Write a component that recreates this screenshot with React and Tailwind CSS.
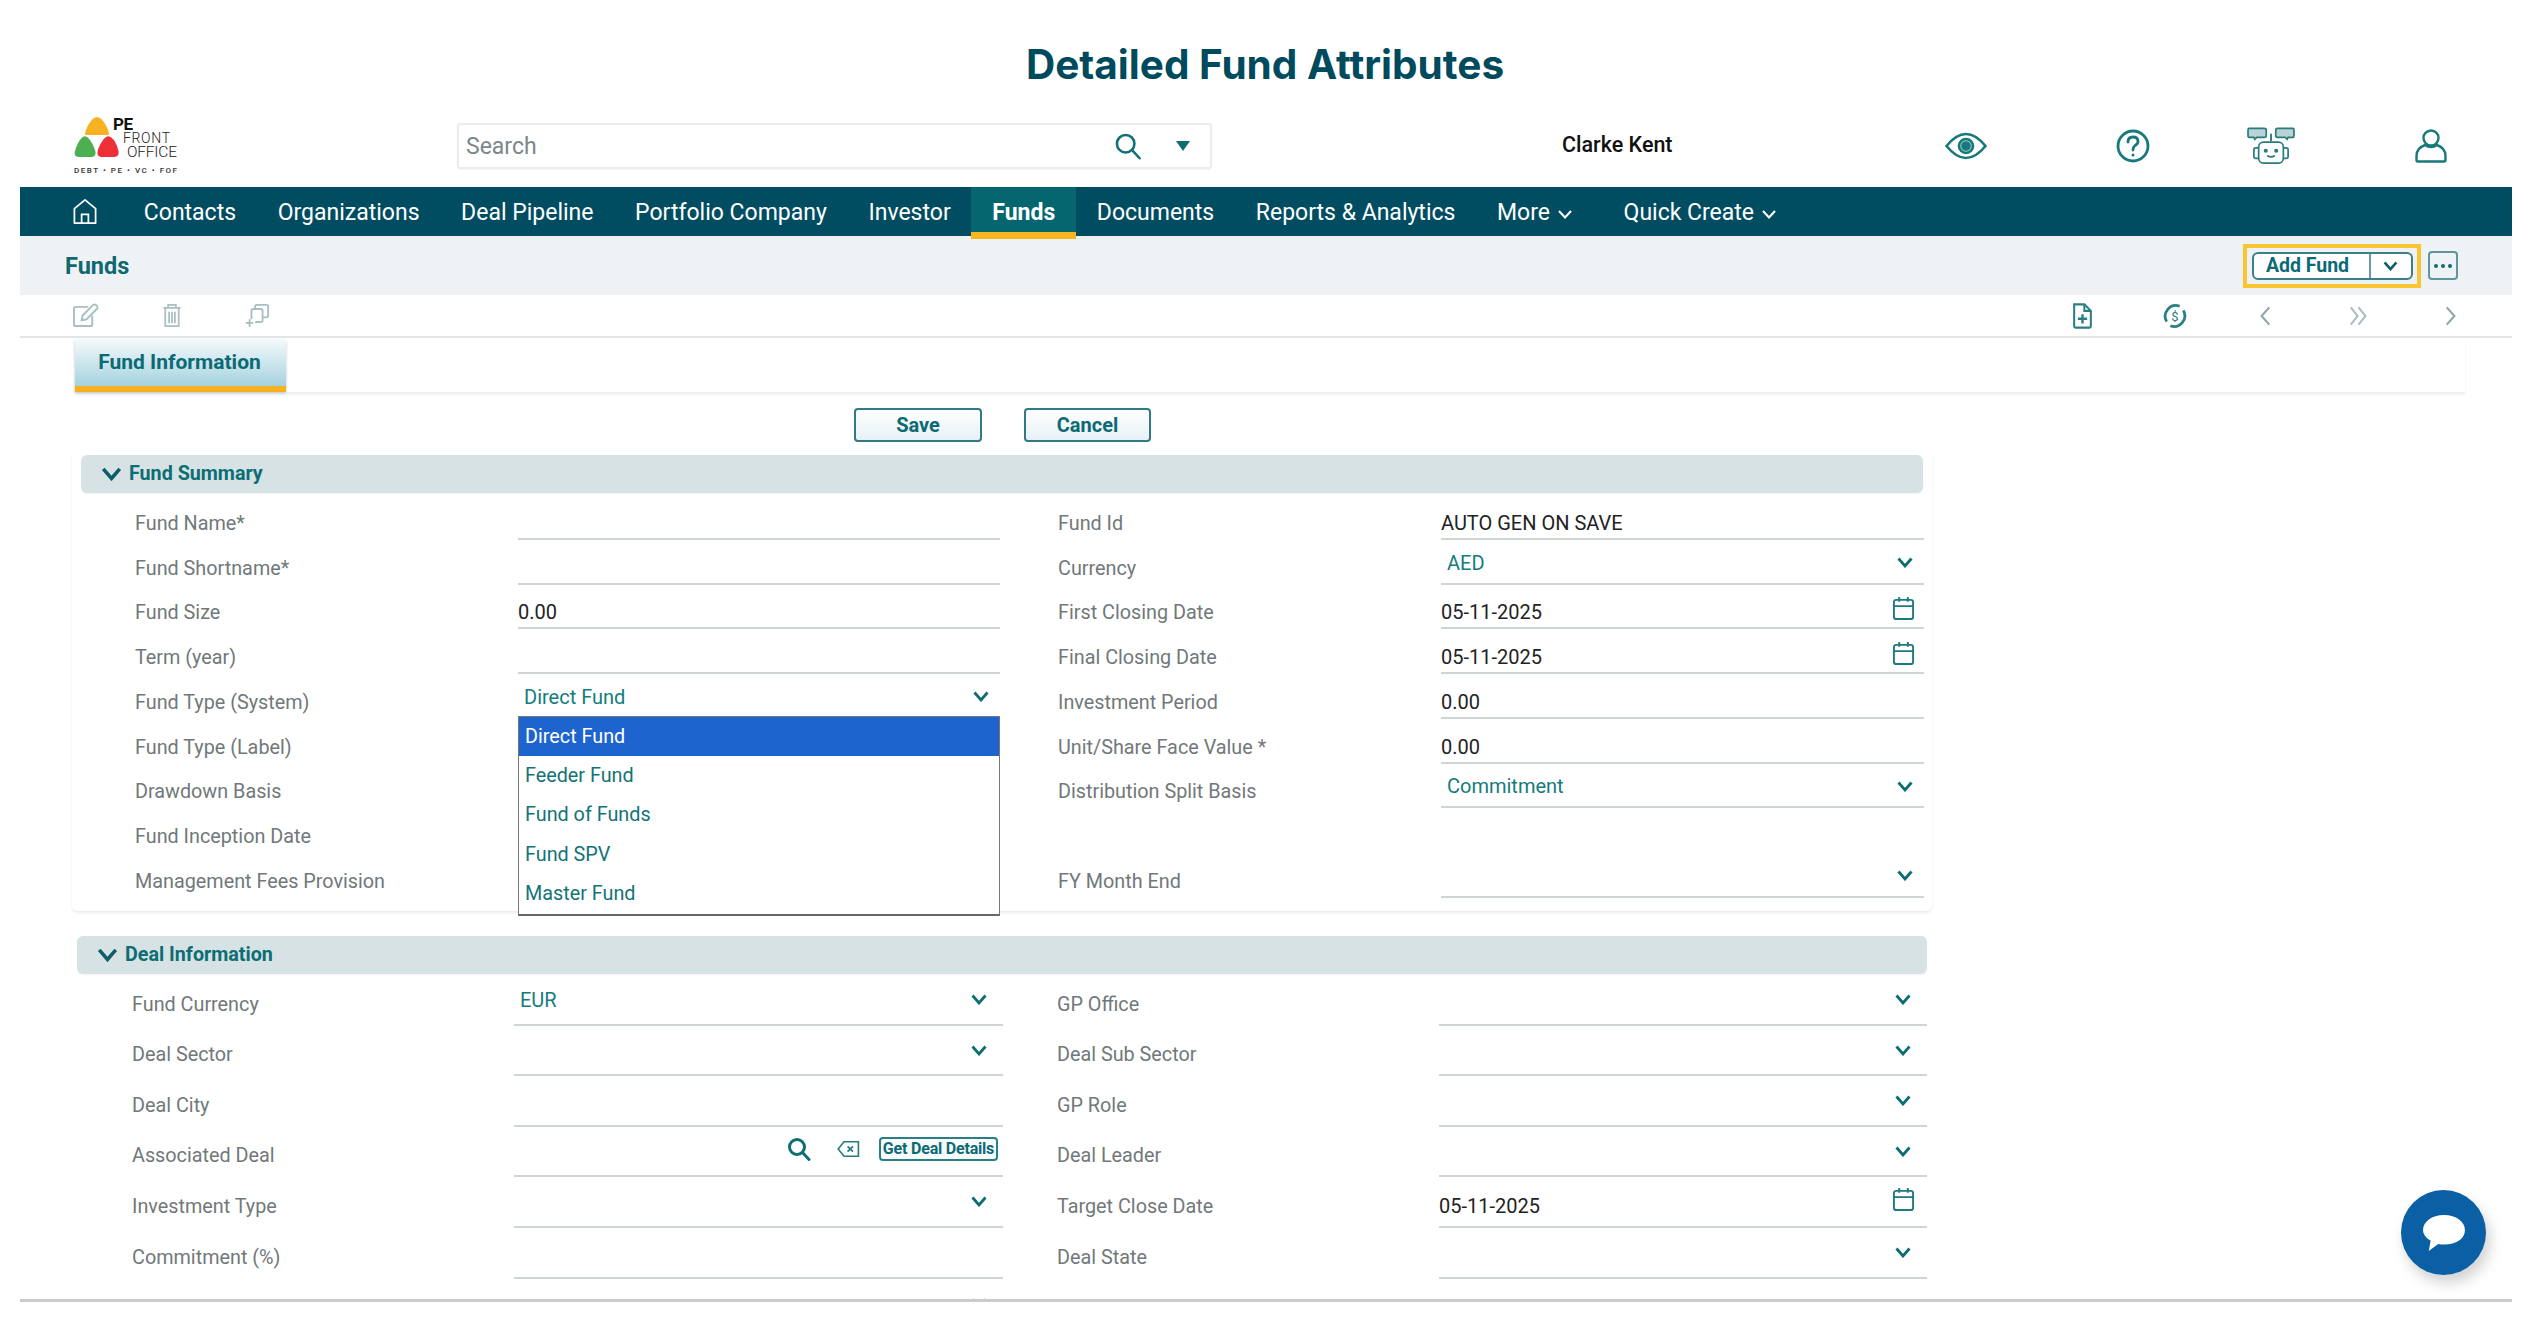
import React from 'react';

const NAV_ITEMS = ['Contacts', 'Organizations', 'Deal Pipeline', 'Portfolio Company', 'Investor', 'Funds', 'Documents', 'Reports & Analytics'];

const DROPDOWN_ITEMS = ['Direct Fund', 'Feeder Fund', 'Fund of Funds', 'Fund SPV', 'Master Fund'];

const SUMMARY_ROWS = [
  [{ label: 'Fund Name*' }, { label: 'Fund Id', text: 'AUTO GEN ON SAVE' }],
  [{ label: 'Fund Shortname*' }, { label: 'Currency', select: 'AED' }],
  [{ label: 'Fund Size', text: '0.00' }, { label: 'First Closing Date', date: '05-11-2025' }],
  [{ label: 'Term (year)' }, { label: 'Final Closing Date', date: '05-11-2025' }],
  [{ label: 'Fund Type (System)', select: 'Direct Fund', menu: true }, { label: 'Investment Period', text: '0.00' }],
  [{ label: 'Fund Type (Label)' }, { label: 'Unit/Share Face Value *', text: '0.00' }],
  [{ label: 'Drawdown Basis' }, { label: 'Distribution Split Basis', select: 'Commitment' }],
  [{ label: 'Fund Inception Date' }, { blank: true }],
  [{ label: 'Management Fees Provision' }, { label: 'FY Month End', select: '' }],
];

const DEAL_ROWS = [
  [{ label: 'Fund Currency', select: 'EUR' }, { label: 'GP Office', select: '' }],
  [{ label: 'Deal Sector', select: '' }, { label: 'Deal Sub Sector', select: '' }],
  [{ label: 'Deal City' }, { label: 'GP Role', select: '' }],
  [{ label: 'Associated Deal', lookup: true }, { label: 'Deal Leader', select: '' }],
  [{ label: 'Investment Type', select: '' }, { label: 'Target Close Date', date: '05-11-2025' }],
  [{ label: 'Commitment (%)' }, { label: 'Deal State', select: '' }],
];

const Chevron = ({ className = 'w-[16px] h-[11px] text-[#0d6e72]' }) => (
  <svg viewBox="0 0 16 11" className={className} fill="none" stroke="currentColor" strokeWidth="2.8">
    <path d="M1.5 1.5 L8 9 L14.5 1.5" />
  </svg>
);

const NavChevron = () => (
  <svg viewBox="0 0 14 9" className="w-[14px] h-[9px] ml-[8px] mt-[3px]" fill="none" stroke="currentColor" strokeWidth="2">
    <path d="M1 1 L7 7.5 L13 1" />
  </svg>
);

const CalendarIcon = () => (
  <svg viewBox="0 0 24 26" className="w-[23px] h-[25px] text-[#1f7a80]" fill="none" stroke="currentColor" strokeWidth="2">
    <rect x="2" y="4" width="20" height="20" rx="2.5" />
    <path d="M2 10.5 H22 M7.5 1 V6 M16.5 1 V6" />
  </svg>
);

const SearchIcon = ({ className, strokeWidth = 2.2 }) => (
  <svg viewBox="0 0 24 24" className={className} fill="none" stroke="currentColor" strokeWidth={strokeWidth}>
    <circle cx="10" cy="10" r="7.5" />
    <path d="M15.5 15.5 L22 22.5" strokeLinecap="round" />
  </svg>
);

const Logo = () => (
  <svg viewBox="0 0 104 60" className="w-[104px] h-[60px] overflow-visible">
    <path d="M23 1 C28 1 33 10 35 17 Q35.500 19 33 19 H13 Q10.500 19 11 17 C13 10 18 1 23 1 Z" fill="#f6b221" />
    <path d="M10 20.500 C14 19 20 29 21.500 36 C22 39 20 41 17 41 H5 C1 41 0 38 1 35 C3 28 7 21 10 20.500 Z" fill="#4cb052" />
    <path d="M35 20.500 C39 21 43 28 44.500 35 C45 38 44 41 40 41 H28 C25 41 23 39 23.500 36 C25 29 31 19 35 20.500 Z" fill="#ee2f37" />
    <text x="39" y="14" fontFamily="Roboto, sans-serif" fontSize="17" fontWeight="700" fill="#111" textLength="20">PE</text>
    <text x="49" y="27" fontFamily="Roboto, sans-serif" fontSize="14" fontWeight="300" fill="#222" textLength="47">FRONT</text>
    <text x="53" y="41" fontFamily="Roboto, sans-serif" fontSize="15.500" fontWeight="300" fill="#222" textLength="50">OFFICE</text>
    <text x="0" y="57" fontFamily="Roboto, sans-serif" fontSize="8" fontWeight="500" fill="#333" textLength="103">DEBT • PE • VC • FOF</text>
  </svg>
);

const RobotIcon = () => (
  <svg viewBox="0 0 50 40" className="w-[48px] h-[38px] text-[#2a7b7e]" fill="none" stroke="currentColor" strokeWidth="1.8">
    <path d="M2 1.500 H18 Q20 1.500 20 3.500 V9 Q20 11 18 11 H10 L8 13 L7 11 H2 Q0.800 11 0.800 9 V3.500 Q0.800 1.500 2 1.500 Z" fill="#b9d2d3" />
    <path d="M32 1.500 H48 Q49.200 1.500 49.200 3.500 V9 Q49.200 11 48 11 H43 L42 13 L40 11 H32 Q30 11 30 9 V3.500 Q30 1.500 32 1.500 Z" fill="#b9d2d3" />
    <path d="M25 7 V15" strokeWidth="2" />
    <rect x="12" y="16" width="26" height="22" rx="5" />
    <path d="M12 22 H9 Q7 22 7 24 V31 Q7 33 9 33 H12 M38 22 H41 Q43 22 43 24 V31 Q43 33 41 33 H38" />
    <path d="M21 30 Q25 33 29 30" />
    <circle cx="19.500" cy="25" r="1.300" fill="currentColor" />
    <circle cx="30.500" cy="25" r="1.300" fill="currentColor" />
  </svg>
);

const Field = ({ field, deal }) => {
  if (field.blank) return <div />;
  return (
    <div className={`relative flex h-full items-end border-b-2 border-[#cfd4d6] ${deal ? 'pb-[8px]' : 'pb-[3px]'}`}>
      {field.text && <span className="text-[20px] leading-[24px] text-[#222]">{field.text}</span>}
      {field.date && (
        <>
          <span className="text-[20px] leading-[24px] text-[#222]">{field.date}</span>
          <span className={`ml-auto ${deal ? 'mr-[12px] mb-[6px]' : 'mr-[9px] mb-[3px]'}`}><CalendarIcon /></span>
        </>
      )}
      {field.select !== undefined && (
        <div className={`flex h-[24px] w-full items-center pl-[6px] ${deal ? 'pr-[16px] mb-[4px]' : 'pr-[11px] mb-[5px]'}`}>
          <span className="text-[20px] leading-[24px] text-[#137c7d]">{field.select}</span>
          <span className="ml-auto"><Chevron /></span>
        </div>
      )}
      {field.lookup && (
        <div className="flex w-full items-center justify-end pr-[5px] mb-[5px]">
          <SearchIcon className="w-[24px] h-[26px] text-[#0d6e72] mr-[25px]" strokeWidth={3} />
          <svg viewBox="0 0 26 20" className="w-[25px] h-[18px] text-[#2a7b7e] mr-[18px]" fill="none" stroke="currentColor" strokeWidth="1.800">
            <path d="M8 2 H24 V18 H8 L1.500 10 Z" />
            <path d="M12 7 L18 13 M18 7 L12 13" strokeWidth="2" />
          </svg>
          <button className="h-[24px] w-[119px] rounded-[4px] border-2 border-[#2a7f85] bg-[#f7fbfb] text-[16px] leading-[18px] font-bold tracking-[-0.2px] text-[#0c6a75] whitespace-nowrap">Get Deal Details</button>
        </div>
      )}
      {field.menu && (
        <div className="absolute left-0 right-0 top-[calc(100%-1px)] z-10 border border-b-2 border-[#777] border-b-[#666] bg-white">
          {DROPDOWN_ITEMS.map((item, i) => (
            <div key={item} className={`flex h-[39.400px] items-center pl-[6px] text-[19.800px] ${i === 0 ? 'bg-[#1d64cf] text-white' : 'text-[#137377]'}`}>{item}</div>
          ))}
        </div>
      )}
    </div>
  );
};

const Label = ({ field, deal }) => (
  <div className={`flex h-full items-end text-[19.800px] leading-[24px] text-[#71787a] ${deal ? 'pb-[9px]' : 'pb-[4px]'}`}>{field.label}</div>
);

const SectionBar = ({ title, className }) => (
  <div className={`flex h-[38px] items-center rounded-[6px] bg-[#d6e2e4] pl-[20px] shadow-[0_1px_2px_rgba(0,0,0,0.05)] ${className}`}>
    <Chevron className="w-[21px] h-[14px] text-[#0c5f68]" />
    <span className="ml-[7px] text-[19.700px] font-bold text-[#0d6d75]">{title}</span>
  </div>
);

export default function App() {
  return (
    <div className="relative h-[1330px] w-[2530px] overflow-hidden bg-white [font-family:Roboto,sans-serif]">
      <h1 className="flex h-[110px] items-start justify-center pt-[38px] text-[40.500px] leading-[54px] font-bold text-[#004a5e] [font-family:Inter,sans-serif]">
        Detailed Fund Attributes
      </h1>

      <div className="ml-[20px] w-[2492px]">
        {/* top header */}
        <div className="flex h-[77px] items-center pb-[6px]">
          <div className="ml-[54px] w-[383px]"><Logo /></div>
          <div className="flex h-[46px] w-[755px] items-center rounded-[3px] border-2 border-[#ececec] pl-[7px] pr-[20px] shadow-[0_1px_2px_rgba(0,0,0,0.04)]">
            <span className="pt-[3px] text-[23px] text-[#7b8789]">Search</span>
            <SearchIcon className="ml-auto w-[28px] h-[30px] text-[#12707a]" />
            <svg viewBox="0 0 14 10" className="ml-[34px] w-[14px] h-[10px] text-[#0d6e72]"><path d="M0 0 H14 L7 10 Z" fill="currentColor" /></svg>
          </div>
          <span className="ml-[350px] text-[21.500px] font-medium text-[#111]">Clarke Kent</span>
          <svg viewBox="0 0 42 30" className="ml-[272px] w-[42px] h-[30px] text-[#17797b]" fill="none" stroke="currentColor" strokeWidth="2.6">
            <path d="M1.500 15 Q21 -9 40.500 15 Q21 39 1.500 15 Z" />
            <circle cx="21" cy="15" r="7" fill="#a8d5d2" />
            <circle cx="21" cy="15" r="3.500" fill="currentColor" />
          </svg>
          <svg viewBox="0 0 34 34" className="ml-[129px] w-[34px] h-[34px] text-[#17797b]" fill="none" stroke="currentColor" strokeWidth="2.800">
            <circle cx="17" cy="17" r="15" />
            <path d="M12 13 Q12 8 17 8 Q22 8 22 12.500 Q22 15 19 16.500 Q17 18 17 21" strokeLinecap="round" />
            <circle cx="17" cy="26" r="1.500" fill="currentColor" stroke="none" />
          </svg>
          <span className="ml-[97px]"><RobotIcon /></span>
          <svg viewBox="0 0 32 34" className="ml-[120px] w-[32px] h-[34px] text-[#17797b]" fill="none" stroke="currentColor" strokeWidth="2.400">
            <circle cx="16" cy="9" r="7.500" />
            <path d="M10 16 Q1.500 19 1.500 27 V31 Q1.500 32.500 3 32.500 H29 Q30.500 32.500 30.500 31 V27 Q30.500 19 22 16 Q16 20 10 16 Z" />
          </svg>
        </div>

        {/* main nav */}
        <nav className="flex h-[49px] items-stretch bg-[#004d62] pl-[52px] text-white">
          <div className="flex w-[51px] items-center">
            <svg viewBox="0 0 26 28" className="w-[26px] h-[27px]" fill="none" stroke="currentColor" strokeWidth="1.800">
              <path d="M2 11 L13 2 L24 11 V26 H2 Z" strokeLinejoin="round" />
              <path d="M9.500 26 V17 H16.500 V26" />
            </svg>
          </div>
          {NAV_ITEMS.map((item) => (
            item === 'Funds' ? (
              <div key={item} className="relative z-10 flex h-[52px] items-center border-b-[7px] border-[#f7b520] bg-[#05666f] px-[20.800px] pt-[7px] text-[23px] font-bold">{item}</div>
            ) : (
              <div key={item} className="flex items-center px-[20.800px] pt-[3px] text-[23px]">{item}</div>
            )
          ))}
          <div className="flex items-center px-[20.800px] pt-[3px] text-[23px]">More<NavChevron /></div>
          <div className="ml-[10px] flex items-center px-[20.800px] pt-[3px] text-[23px]">Quick Create<NavChevron /></div>
        </nav>

        {/* page title bar */}
        <div className="flex h-[59px] items-center bg-[#eff2f5] pl-[45px] pr-[54px]">
          <span className="pt-[2px] text-[23.500px] font-bold text-[#0d6872]">Funds</span>
          <div className="ml-auto flex h-[44px] w-[178px] items-center justify-center border-4 border-[#f9c531]">
            <div className="flex h-[28px] w-[161px] rounded-[6px] border-2 border-[#3d7f87] bg-white">
              <span className="flex w-[108px] items-center justify-center text-[19.500px] font-bold text-[#0c6a75]">Add Fund</span>
              <span className="ml-[7px] flex flex-1 items-center justify-center border-l-2 border-[#6b9ba0]">
                <Chevron className="w-[15px] h-[10px] text-[#0c5f68]" />
              </span>
            </div>
          </div>
          <div className="ml-[7px] flex h-[29px] w-[30px] items-center justify-center gap-[3px] rounded-[4px] border-2 border-[#5f969b]">
            <i className="h-[4px] w-[4px] rounded-full bg-[#0f6a72]" />
            <i className="h-[4px] w-[4px] rounded-full bg-[#0f6a72]" />
            <i className="h-[4px] w-[4px] rounded-full bg-[#0f6a72]" />
          </div>
        </div>

        {/* action toolbar */}
        <div className="flex h-[43px] items-center border-b-2 border-[#e2e4e6] pl-[52px] pr-[55px]">
          <svg viewBox="0 0 28 26" className="w-[27px] h-[25px] text-[#a9bfc1]" fill="none" stroke="currentColor" strokeWidth="2">
            <path d="M17 4 H4 Q2 4 2 6 V22 Q2 24 4 24 H19 Q21 24 21 22 V13" />
            <path d="M10 18 L11 13 L22 2 Q24 1 26 3 Q27 5 26 6 L15 17 Z" />
          </svg>
          <svg viewBox="0 0 20 26" className="ml-[63px] w-[20px] h-[25px] text-[#a9bfc1]" fill="none" stroke="currentColor" strokeWidth="1.800">
            <path d="M1 5 H19 M6 5 V2 H14 V5 M3 5 V24 H17 V5 M7 9 V21 M10 9 V21 M13 9 V21" />
          </svg>
          <svg viewBox="0 0 28 26" className="ml-[62px] w-[26px] h-[25px] text-[#a9bfc1]" fill="none" stroke="currentColor" strokeWidth="2">
            <path d="M12 6 V3 Q12 1.500 14 1.500 H24 Q26 1.500 26 3 V13 Q26 15 24 15 H20" />
            <path d="M8 17 V8 Q8 6 10 6 H18 Q20 6 20 8 V18 Q20 20 18 20 H12" />
            <path d="M6 17 V25 M2 21 H10" />
          </svg>
          <svg viewBox="0 0 22 28" className="ml-auto w-[21px] h-[26px] text-[#2a7f83]" fill="none" stroke="currentColor" strokeWidth="2.200">
            <path d="M2 1.500 H13 L20 8.500 V25 Q20 26.500 18.500 26.500 H3.500 Q2 26.500 2 25 Z" />
            <path d="M13 1.500 V8.500 H20" />
            <path d="M11 12 V22 M6 17 H16" strokeWidth="2.600" />
          </svg>
          <svg viewBox="0 0 28 28" className="ml-[69px] w-[26px] h-[26px] text-[#2a7f83]" fill="none" stroke="currentColor" strokeWidth="3">
            <path d="M5 20 A11.500 11.500 0 0 1 19 3.500 M23 8 A11.500 11.500 0 0 1 9 24.500" />
            <text x="14" y="19" textAnchor="middle" fontSize="14" fontFamily="Roboto, sans-serif" fill="currentColor" stroke="none">$</text>
          </svg>
          <svg viewBox="0 0 14 24" className="ml-[71px] w-[12px] h-[22px] text-[#8fa5a8]" fill="none" stroke="currentColor" strokeWidth="2.400">
            <path d="M12 2 L3 12 L12 22" />
          </svg>
          <svg viewBox="0 0 22 24" className="ml-[78px] w-[19px] h-[22px] text-[#a9bfc1]" fill="none" stroke="currentColor" strokeWidth="2.400">
            <path d="M2 2 L10 12 L2 22 M11 2 L19 12 L11 22" />
          </svg>
          <svg viewBox="0 0 14 24" className="ml-[77px] w-[12px] h-[22px] text-[#8fa5a8]" fill="none" stroke="currentColor" strokeWidth="2.400">
            <path d="M2 2 L11 12 L2 22" />
          </svg>
        </div>

        {/* scrolling form area */}
        <div className="h-[964px] overflow-hidden border-b-[3px] border-[#c9cbcc]">
          <div className="ml-[55px] mr-[47px] flex h-[53px] mt-[2px] border-b border-[#eef0f1] shadow-[0_2px_3px_rgba(0,0,0,0.06)]">
            <div className="flex h-[52px] w-[211px] items-start justify-center border-b-[6px] border-[#f5b11e] bg-gradient-to-b from-[#f3f9fb] to-[#a5d2df] pt-[7px] pr-[2px] text-[21px] font-bold text-[#0c6a75] shadow-[0_1px_3px_rgba(0,0,0,0.2)]">
              Fund Information
            </div>
          </div>

          <div className="mt-[15px] flex justify-start gap-[42px] pl-[834px]">
            <button className="h-[34px] w-[128px] rounded-[4px] border-2 border-[#2f7a83] bg-gradient-to-b from-white to-[#e6f1f5] text-[20px] font-bold text-[#0c6a75]">Save</button>
            <button className="h-[34px] w-[127px] rounded-[4px] border-2 border-[#2f7a83] bg-gradient-to-b from-white to-[#e6f1f5] text-[20px] font-bold text-[#0c6a75]">Cancel</button>
          </div>

          {/* Fund Summary */}
          <div className="relative mt-[13px] ml-[52px] h-[456px] w-[1860px] rounded-b-[6px] pl-[9px] pr-[9px] shadow-[0_2px_3px_rgba(0,0,0,0.08)]">
            <SectionBar title="Fund Summary" className="w-[1842px]" />
            <div className="mt-[2px] grid grid-cols-[383px_482px_58px_383px_483px] auto-rows-[44.750px] pl-[54px]">
              {SUMMARY_ROWS.map((row, i) => (
                <React.Fragment key={i}>
                  <Label field={row[0]} />
                  <Field field={row[0]} />
                  <div />
                  <Label field={row[1]} />
                  <Field field={row[1]} />
                </React.Fragment>
              ))}
            </div>
          </div>

          {/* Deal Information */}
          <div className="mt-[25px] ml-[57px]">
            <SectionBar title="Deal Information" className="w-[1850px]" />
            <div className="mt-[1px] grid grid-cols-[382px_489px_54px_382px_488px] auto-rows-[50.600px] pl-[55px]">
              {DEAL_ROWS.map((row, i) => (
                <React.Fragment key={i}>
                  <Label field={row[0]} deal />
                  <Field field={row[0]} deal />
                  <div />
                  <Label field={row[1]} deal />
                  <Field field={row[1]} deal />
                </React.Fragment>
              ))}
              <div />
              <div className="flex justify-end pr-[16px] pt-[19px]"><Chevron /></div>
            </div>
          </div>
        </div>
      </div>

      {/* floating chat button */}
      <div className="absolute left-[2401px] top-[1190px] flex h-[85px] w-[85px] items-center justify-center rounded-full bg-[#0b5fa5] shadow-[4px_8px_14px_rgba(0,0,0,0.18)]">
        <svg viewBox="0 0 48 42" className="w-[46px] h-[40px] text-white">
          <path d="M24 2 C37 2 46 9 46 18 C46 27 37 33 24 33 C22 33 20 33 18 32.500 L8 40 L10 29 C5 26 2 22 2 18 C2 9 11 2 24 2 Z" fill="currentColor" />
        </svg>
      </div>
    </div>
  );
}
